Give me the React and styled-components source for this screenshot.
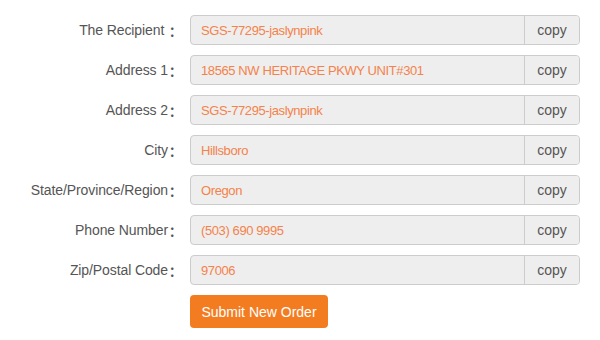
import styled, { createGlobalStyle } from 'styled-components'

const GlobalStyle = createGlobalStyle`
    body {
        margin: 0;
        background: #fff;
        font-family: "Liberation Sans", Arial, "Noto Sans CJK SC", sans-serif;
    }
`

const Form = styled.div`
    display: grid;
    grid-template-columns: 182px 390px;
    column-gap: 8px;
    row-gap: 10px;
    padding-top: 15px;
`

const Label = styled.div`
    height: 30px;
    display: flex;
    align-items: center;
    justify-content: flex-end;
    font-size: 14px;
    letter-spacing: -0.1px;
    color: #555;
    white-space: pre;
`

const Colon = styled.span`
    font-family: "Noto Sans CJK SC", sans-serif;
    font-weight: bold;
    font-size: 13px;
    display: inline-block;
    width: 14px;
    text-indent: 1px;
`

const Group = styled.div`
    display: flex;
    height: 30px;
    box-sizing: border-box;
    border: 1px solid #ccc;
    border-radius: 4px;
    background: #eee;
    overflow: hidden;
`

const Value = styled.div`
    flex: 1;
    display: flex;
    align-items: center;
    padding-left: 10px;
    font-size: 13px;
    letter-spacing: -0.4px;
    color: #f5824a;
`

const Copy = styled.button`
    width: 55px;
    border: none;
    border-left: 1px solid #ccc;
    background: #eee;
    color: #555;
    font-family: inherit;
    font-size: 14px;
    padding: 0;
    cursor: pointer;
`

const Submit = styled.button`
    grid-column: 2;
    justify-self: start;
    width: 138px;
    height: 33px;
    border: none;
    border-radius: 4px;
    background: #f47c20;
    color: #fff;
    font-family: inherit;
    font-size: 14px;
    padding: 0;
    cursor: pointer;
`

const fields = [
    ['The Recipient ', 'SGS-77295-jaslynpink'],
    ['Address 1', '18565 NW HERITAGE PKWY UNIT#301'],
    ['Address 2', 'SGS-77295-jaslynpink'],
    ['City', 'Hillsboro'],
    ['State/Province/Region', 'Oregon'],
    ['Phone Number', '(503) 690 9995'],
    ['Zip/Postal Code', '97006'],
]

const App = () => {
    return (
        <>
            <GlobalStyle />
            <Form>
                {fields.map(([label, value]) => [
                    <Label key={label + 'l'}>{label}<Colon>：</Colon></Label>,
                    <Group key={label + 'g'}>
                        <Value>{value}</Value>
                        <Copy>copy</Copy>
                    </Group>,
                ])}
                <Submit>Submit New Order</Submit>
            </Form>
        </>
    )
}

export default App
